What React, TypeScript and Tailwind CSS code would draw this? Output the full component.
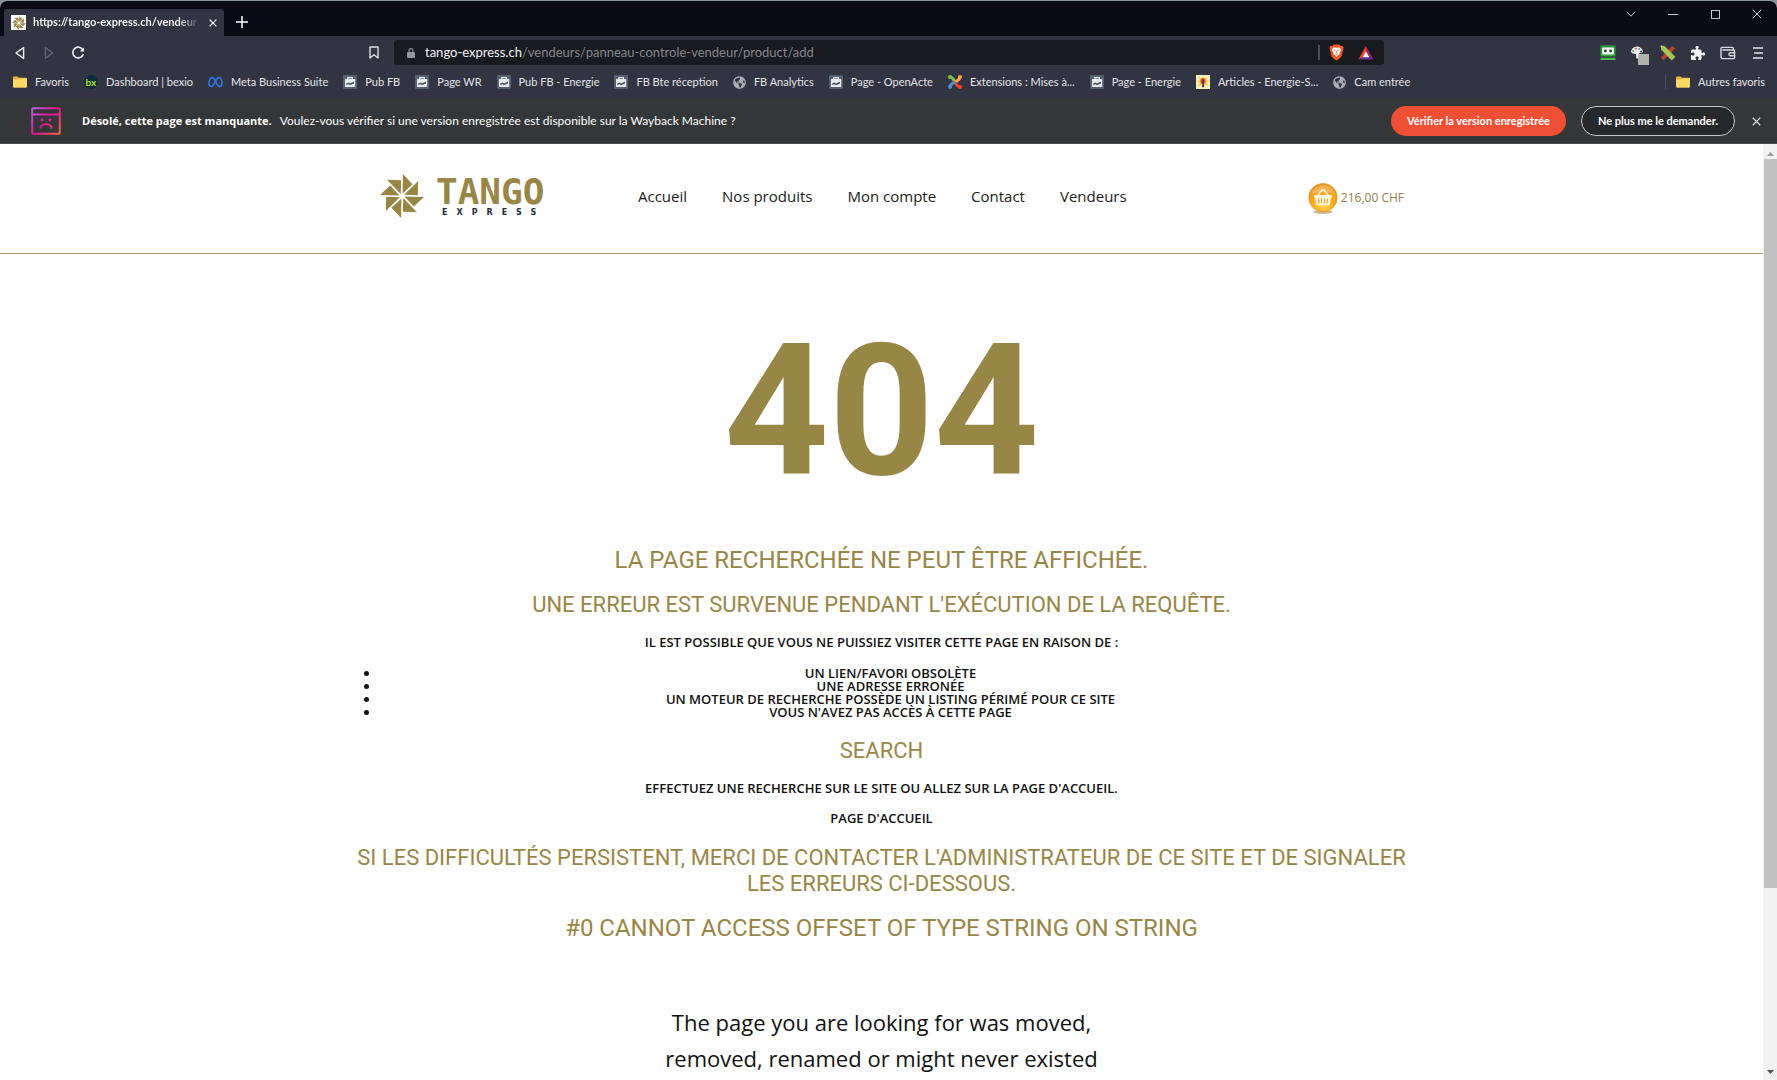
import type { ReactNode } from "react";
import { FaGlobeAmericas } from "react-icons/fa";
import { FaPuzzlePiece } from "react-icons/fa6";

function Pinwheel({ className }: { className: string }) {
  const blades = [0, 45, 90, 135, 180, 225, 270, 315];
  return (
    <svg viewBox="-22 -22 44 44" className={className} aria-hidden="true">
      {blades.map((a) => (
        <path key={a} d="M0.6 -2.4 L0.9 -22 L10.6 -11.8 Z" fill="#988647" transform={`rotate(${a})`} />
      ))}
    </svg>
  );
}

function Folder() {
  return (
    <svg viewBox="0 0 14 14" className="size-[14px] shrink-0" aria-hidden="true">
      <path d="M0 2.2 Q0 1.4 .8 1.4 H4.6 L6 2.8 H13.2 Q14 2.8 14 3.6 V11.6 Q14 12.4 13.2 12.4 H.8 Q0 12.4 0 11.6Z" fill="#e8b339" />
      <path d="M0 4.6 H5 L6.4 3.4 H14 V11.6 Q14 12.4 13.2 12.4 H.8 Q0 12.4 0 11.6Z" fill="#fbd968" />
    </svg>
  );
}

function Bexio() {
  return (
    <span className="flex size-[14px] shrink-0 items-center justify-center rounded-full bg-[#0d2f3b] text-[10px] leading-none font-bold text-[#b8dc1e]">
      bx
    </span>
  );
}

function Meta() {
  return (
    <svg viewBox="0 0 16 12" className="h-3 w-[15px] shrink-0" aria-hidden="true">
      <path
        d="M1 8.2 C1 4.6 2.4 1.4 4.6 1.4 C7.8 1.4 8.8 10.6 12.4 10.6 C14.2 10.6 15 9.6 15 7.6 C15 4.2 13.6 1.4 11.4 1.4 C8 1.4 7.2 10.6 3.6 10.6 C1.9 10.6 1 9.8 1 8.2Z"
        fill="none"
        stroke="#2f74e8"
        strokeWidth="1.8"
      />
    </svg>
  );
}

function Briefcase() {
  return (
    <svg viewBox="0 0 14 14" className="size-[14px] shrink-0" aria-hidden="true">
      <rect width="14" height="14" rx="1" fill="#566070" />
      <path d="M4.8 4.2 V2.6 H9.4 V4.2" fill="none" stroke="#e8ebee" strokeWidth="1.2" />
      <rect x="2" y="4" width="10.2" height="8" rx=".6" fill="#e8ebee" />
      <path d="M3.2 8.6 L5.6 7.4 L7 8.6 L11 6.4 V8.4 L7 10.2 L5.4 9.2 L3.2 10Z" fill="#4a5463" />
    </svg>
  );
}

function Globe() {
  return <FaGlobeAmericas className="size-[13px] shrink-0 text-[#a9acb4]" aria-hidden="true" />;
}

function Joomla() {
  return (
    <svg viewBox="0 0 14 14" className="size-[14px] shrink-0" fill="none" strokeWidth="3" aria-hidden="true">
      <path d="M2 2 Q5 2.4 7 7" stroke="#7ac143" />
      <path d="M12 2 Q11.6 5 7 7" stroke="#f9a541" />
      <path d="M12 12 Q9 11.6 7 7" stroke="#f44321" />
      <path d="M2 12 Q2.4 9 7 7" stroke="#5091cd" />
      <circle cx="2" cy="2" r="2" fill="#7ac143" />
      <circle cx="12" cy="2" r="2" fill="#f9a541" />
      <circle cx="12" cy="12" r="2" fill="#f44321" />
      <circle cx="2" cy="12" r="2" fill="#5091cd" />
    </svg>
  );
}

function Sunburst() {
  return (
    <svg viewBox="0 0 14 14" className="size-[14px] shrink-0" aria-hidden="true">
      <rect width="14" height="14" fill="#f2f3c4" />
      <path d="M7 0 L8 4 L12 1.4 L9.8 5.2 L14 6 L10 7.6 L13 11 L9 9.6 L7 14 L5 9.6 L1.4 11.6 L4 7.8 L0 6.4 L4.2 5.2 L2 1.4 L6 4Z" fill="#f4c63a" />
      <ellipse cx="7" cy="6" rx="2.6" ry="3" fill="#e5532d" />
      <path d="M6.2 4.4 H7.8 V9 L8.2 12 H6 L6.4 9Z" fill="#4a2373" />
    </svg>
  );
}

const bookmarks: { label: string; icon: ReactNode }[] = [
  { label: "Favoris", icon: <Folder /> },
  { label: "Dashboard | bexio", icon: <Bexio /> },
  { label: "Meta Business Suite", icon: <Meta /> },
  { label: "Pub FB", icon: <Briefcase /> },
  { label: "Page WR", icon: <Briefcase /> },
  { label: "Pub FB - Energie", icon: <Briefcase /> },
  { label: "FB Bte réception", icon: <Briefcase /> },
  { label: "FB Analytics", icon: <Globe /> },
  { label: "Page - OpenActe", icon: <Briefcase /> },
  { label: "Extensions : Mises à...", icon: <Joomla /> },
  { label: "Page - Energie", icon: <Briefcase /> },
  { label: "Articles - Energie-S...", icon: <Sunburst /> },
  { label: "Cam entrée", icon: <Globe /> },
];

function IconButton({ label, children }: { label: string; children: ReactNode }) {
  return (
    <button type="button" aria-label={label} className="flex size-4 shrink-0 items-center justify-center">
      {children}
    </button>
  );
}

function Cross({ className }: { className: string }) {
  return (
    <svg viewBox="0 0 10 10" className={className} fill="none" stroke="currentColor" aria-hidden="true">
      <path d="M.8 .8 L9.2 9.2 M9.2 .8 L.8 9.2" />
    </svg>
  );
}

function TabStrip() {
  return (
    <div className="flex h-[35px] items-end justify-between bg-[#0a0a15] pl-1">
      <div className="flex items-end">
        <div className="flex h-[27px] w-[220px] items-center rounded-t-[3px] bg-[#333442] pr-[7px] pl-[7px]">
          <span className="mr-[7px] flex size-[15px] shrink-0 items-center justify-center bg-white">
            <Pinwheel className="size-[14px]" />
          </span>
          <span className="min-w-0 flex-1 overflow-hidden bg-linear-to-r from-white from-85% to-transparent bg-clip-text text-[11px] font-bold whitespace-nowrap text-transparent">
            https://tango-express.ch/vendeur
          </span>
          <button type="button" aria-label="Fermer l'onglet" className="ml-2 text-white">
            <Cross className="size-2 stroke-[1.6]" />
          </button>
        </div>
        <button type="button" aria-label="Nouvel onglet" className="ml-3 flex h-7 items-center text-white">
          <svg viewBox="0 0 12 12" className="size-3" stroke="currentColor" strokeWidth="1.5" aria-hidden="true">
            <path d="M6 0 V12 M0 6 H12" />
          </svg>
        </button>
      </div>
      <div className="flex items-center gap-[26px] self-start pt-[5px] pr-3 text-[#c6c7cc]">
        <IconButton label="Rechercher dans les onglets">
          <svg viewBox="0 0 10 6" className="h-[6px] w-[10px]" fill="none" stroke="currentColor" aria-hidden="true">
            <path d="M.8 .8 L5 5.2 L9.2 .8" />
          </svg>
        </IconButton>
        <IconButton label="Réduire">
          <span className="h-px w-[10px] bg-current" />
        </IconButton>
        <IconButton label="Agrandir">
          <span className="size-[9px] border border-current" />
        </IconButton>
        <IconButton label="Fermer">
          <Cross className="size-[10px]" />
        </IconButton>
      </div>
    </div>
  );
}

function Toolbar() {
  return (
    <div className="flex h-[33px] items-center bg-[#333442]">
      <div className="flex w-[394px] shrink-0 items-center justify-between pr-[15px] pl-3">
        <div className="flex gap-[13px]">
          <IconButton label="Page précédente">
            <svg viewBox="0 0 12 14" className="h-[14px] w-3" fill="none" stroke="#e6e7ea" strokeWidth="1.5" strokeLinejoin="round" aria-hidden="true">
              <path d="M9.6 1.6 V12.4 L2 7Z" />
            </svg>
          </IconButton>
          <IconButton label="Page suivante">
            <svg viewBox="0 0 12 14" className="h-[14px] w-3" fill="none" stroke="#686a76" strokeWidth="1.3" strokeLinejoin="round" aria-hidden="true">
              <path d="M2.4 1.8 V12.2 L9.8 7Z" />
            </svg>
          </IconButton>
          <IconButton label="Actualiser">
            <svg viewBox="0 0 14 14" className="size-[14px]" fill="none" stroke="#f0f0f2" strokeWidth="1.6" aria-hidden="true">
              <path d="M12 4 A5.4 5.4 0 1 0 12.4 8" />
              <path d="M13 1.4 V5.6 H8.8Z" fill="#f0f0f2" stroke="none" />
            </svg>
          </IconButton>
        </div>
        <button type="button" aria-label="Ajouter aux favoris">
          <svg viewBox="0 0 10 13" className="h-[13px] w-[10px]" fill="none" stroke="#dcdde0" strokeWidth="1.4" strokeLinejoin="round" aria-hidden="true">
            <path d="M1 1 H9 V12 L5 8.8 L1 12Z" />
          </svg>
        </button>
      </div>
      <div className="flex h-[25px] max-w-[990px] flex-1 items-center rounded-[3px] bg-[#181a20] pr-[10px] pl-[13px]">
        <svg viewBox="0 0 8 10" className="mr-2.5 h-[10px] w-2" aria-hidden="true">
          <rect y="4" width="8" height="6" rx=".8" fill="#94969b" />
          <path d="M2 4.4 V2.6 A2 2 0 0 1 6 2.6 V4.4" fill="none" stroke="#94969b" strokeWidth="1.1" />
        </svg>
        <a href="#adresse" className="flex-1 text-[13px] whitespace-nowrap text-[#84868c]">
          <span className="text-[#f3f3f4]">tango-express.ch</span>/vendeurs/panneau-controle-vendeur/product/add
        </a>
        <span className="mr-2 h-[15px] w-0.5 bg-[#4b4d55]" />
        <IconButton label="Boucliers">
          <svg viewBox="0 0 16 18" className="h-[17px] w-[15px]" aria-hidden="true">
            <path d="M3.6 2 L5.2 .4 H10.8 L12.4 2 L14.4 1.8 L15.6 4 L15 6 L13.4 12.6 Q13 14 8 17.6 Q3 14 2.6 12.6 L1 6 L.4 4 L1.6 1.8Z" fill="#f15a2b" />
            <path d="M4.6 3.6 L8 4 L11.4 3.6 L13 6.4 L11 9 L11.4 10.6 L9.4 12 L8 13.8 L6.6 12 L4.6 10.6 L5 9 L3 6.4Z" fill="#fff" />
            <path d="M5 6.2 L7.2 6.8 M11 6.2 L8.8 6.8 M8 7.6 V10 M6.6 10.6 L8 11.2 L9.4 10.6" stroke="#f15a2b" strokeWidth=".9" fill="none" />
          </svg>
        </IconButton>
        <span className="w-[14px]" />
        <IconButton label="Brave Rewards">
          <svg viewBox="0 0 16 16" className="size-4" aria-hidden="true">
            <path d="M8 1 L8 6.6 L4.8 12 L.4 14.6Z" fill="#ff4724" />
            <path d="M8 1 L15.6 14.6 L11.2 12 L8 6.6Z" fill="#9e1f63" />
            <path d="M.4 14.6 H15.6 L11.2 12 H4.8Z" fill="#662d91" />
            <path d="M8 6.4 L11.4 12.2 H4.6Z" fill="#fff" />
          </svg>
        </IconButton>
      </div>
      <div className="ml-auto flex items-center gap-[14px] pr-[11px]">
        <IconButton label="RoboForm">
          <svg viewBox="0 0 16 16" className="size-4" aria-hidden="true">
            <rect x=".5" y=".5" width="15" height="11" rx="1" fill="#2fa03b" />
            <rect x="2.2" y="2.4" width="11.6" height="7" rx="1" fill="#f4f6f4" />
            <circle cx="5.4" cy="5.9" r="1.4" fill="#20382a" />
            <circle cx="10.6" cy="5.9" r="1.4" fill="#20382a" />
            <rect x=".5" y="12.8" width="15" height="2.2" fill="#4cb648" />
          </svg>
        </IconButton>
        <IconButton label="ColorZilla">
          <span className="relative flex size-4">
            <svg viewBox="0 0 14 14" className="size-[14px]" aria-hidden="true">
              <path d="M1 7 A6 5.4 0 0 1 13 7 Q12 8.4 9.4 8 L8 13.4 H6.4 L6 9 Q2.4 9 1 7Z" fill="#f6f6f6" />
              <circle cx="3.2" cy="6" r="1.1" fill="#3aa648" />
              <circle cx="6" cy="3.6" r="1.1" fill="#e4572e" />
              <circle cx="9.2" cy="4" r="1.1" fill="#48a7dd" />
              <circle cx="11" cy="6.4" r="1" fill="#333" />
            </svg>
            <span className="absolute top-[9px] left-2 size-[11px] bg-[#b3b2ae]" />
          </span>
        </IconButton>
        <IconButton label="Outils de conception">
          <svg viewBox="0 0 16 16" className="size-4" aria-hidden="true">
            <path d="M12.4 .8 L15.2 3.6 L3.6 15.2 L.8 12.4Z" fill="#b8412f" />
            <path d="M.8 .6 L4.8 1.2 L15.4 11.8 L11.8 15.4 L1.2 4.8Z" fill="#a6c653" />
            <path d="M.8 .6 L3 1 L1.1 3Z" fill="#e8d9a4" />
          </svg>
        </IconButton>
        <IconButton label="Extensions">
          <FaPuzzlePiece className="size-[14px] text-[#f2f2f3]" />
        </IconButton>
        <IconButton label="Portefeuille">
          <svg viewBox="0 0 16 14" className="h-[14px] w-4" fill="none" stroke="#d9dade" strokeWidth="1.4" aria-hidden="true">
            <path d="M13.4 4 V2.6 Q13.4 1.4 12.2 1.4 H2.4 Q1 1.4 1 2.8 V11 Q1 12.6 2.6 12.6 H13.4 Q14.6 12.6 14.6 11.4 V5.2 Q14.6 4 13.4 4 H2.4" />
            <path d="M14.6 6.8 H10.4 Q9 6.8 9 8.2 Q9 9.8 10.4 9.8 H14.6" />
          </svg>
        </IconButton>
        <IconButton label="Menu">
          <svg viewBox="0 0 10 12" className="h-3 w-[10px]" stroke="#e4e5e8" strokeWidth="1.5" aria-hidden="true">
            <path d="M0 1 H10 M1 6 H10 M0 11 H10" />
          </svg>
        </IconButton>
      </div>
    </div>
  );
}

function BookmarkLink({ label, icon }: { label: string; icon: ReactNode }) {
  return (
    <a href="#favori" className="flex items-center gap-2 text-[11px] whitespace-nowrap text-[#e3e4e8]">
      {icon}
      {label}
    </a>
  );
}

function BookmarkBar() {
  return (
    <nav aria-label="Favoris" className="flex h-[30px] items-center bg-[#333442] pr-3 pb-1 pl-[13px]">
      <div className="flex items-center gap-[15px]">
        {bookmarks.map((b) => (
          <BookmarkLink key={b.label} label={b.label} icon={b.icon} />
        ))}
      </div>
      <span className="mr-[10px] ml-auto h-[14px] w-px bg-[#4a4c5e]" />
      <BookmarkLink label="Autres favoris" icon={<Folder />} />
    </nav>
  );
}

function InfoBar() {
  return (
    <div className="flex h-[45px] items-center border-b border-[#4f5052] bg-[#353638] pr-[16px] pl-[31px] text-white">
      <svg viewBox="0 0 30 28" className="mr-[21px] h-7 w-[30px] shrink-0" fill="none" stroke="url(#missing-page)" strokeWidth="2" aria-hidden="true">
        <defs>
          <linearGradient id="missing-page" x1="0" y1="0" x2="30" y2="28" gradientUnits="userSpaceOnUse">
            <stop offset="0" stopColor="#b06be8" />
            <stop offset=".5" stopColor="#e5128f" />
            <stop offset="1" stopColor="#f0703c" />
          </linearGradient>
        </defs>
        <rect x="1.2" y="1.2" width="27.6" height="25.6" rx="1" />
        <path d="M1 7.4 H29" />
        <path d="M9.6 21.4 V19.4 Q15 14.6 20.4 19.4 V21.4" />
        <circle cx="11" cy="12.8" r=".6" />
        <circle cx="19" cy="12.8" r=".6" />
      </svg>
      <p className="flex-1 text-[12px] whitespace-nowrap">
        <strong className="mr-2 font-['Open_Sans',sans-serif] text-[11px] font-bold">Désolé, cette page est manquante.</strong>
        Voulez-vous vérifier si une version enregistrée est disponible sur la Wayback Machine ?
      </p>
      <button type="button" className="mr-[15px] h-[30px] rounded-full bg-[#ee4f35] px-4 text-[11px] font-bold whitespace-nowrap">
        Vérifier la version enregistrée
      </button>
      <button type="button" className="mr-[17px] h-[30px] rounded-full border border-[#c4c4c5] bg-[#27282b] px-4 text-[11px] font-bold whitespace-nowrap">
        Ne plus me le demander.
      </button>
      <button type="button" aria-label="Fermer" className="text-[#d8d8d9]">
        <Cross className="size-[9px] stroke-[1.3]" />
      </button>
    </div>
  );
}

function Basket() {
  return (
    <svg viewBox="0 0 30 32" className="h-8 w-[30px]" aria-hidden="true">
      <defs>
        <radialGradient id="basket-ball" cx=".5" cy=".75" r=".75">
          <stop offset="0" stopColor="#ffd84a" />
          <stop offset=".55" stopColor="#f7a81f" />
          <stop offset="1" stopColor="#e58e17" />
        </radialGradient>
      </defs>
      <ellipse cx="15" cy="30" rx="9.6" ry="1.8" fill="#a98b45" opacity=".6" />
      <circle cx="15" cy="15.6" r="14.2" fill="url(#basket-ball)" stroke="#dd9a35" strokeWidth=".8" />
      <path d="M3 12 A12.4 12 0 0 1 27 12 Q15 8 3 12Z" fill="#fff" opacity=".25" />
      <path d="M9.4 13.6 L13.8 8.2 H16.2 L20.6 13.6" fill="none" stroke="#fff6df" strokeWidth="1.4" />
      <path d="M6 13 H24 V15.6 H22.8 L21.6 23.2 H8.4 L7.2 15.6 H6Z" fill="#fff6df" />
      <path d="M10.4 16.6 L11 21.6 M13.5 16.6 V21.6 M16.5 16.6 V21.6 M19.6 16.6 L19 21.6" stroke="#f3a526" strokeWidth="1.2" />
    </svg>
  );
}

const links = ["Accueil", "Nos produits", "Mon compte", "Contact", "Vendeurs"];

function SiteHeader() {
  return (
    <header className="h-[110px] border-b border-[#a59a6b]">
      <div className="mx-auto flex h-[106px] max-w-[1045px] items-center">
        <a href="#accueil" className="ml-[21px] flex w-[258px] items-center pb-[2px]">
          <Pinwheel className="mr-3 size-11" />
          <span className="flex flex-col">
            <span className="font-['DejaVu_Sans_Mono',monospace] text-[36px] leading-8 font-bold text-[#988647]">TANGO</span>
            <span className="pl-[6px] font-['DejaVu_Sans',sans-serif] text-[8px] leading-[9px] font-bold tracking-[9px] text-[#1f2c3c]">EXPRESS</span>
          </span>
        </a>
        <nav aria-label="Menu principal" className="flex gap-[35px] pb-px text-[15px] text-[#1b1b1b]">
          {links.map((l) => (
            <a key={l} href="#menu">
              {l}
            </a>
          ))}
        </nav>
        <a href="#panier" className="ml-auto flex items-center gap-[3px] pt-px text-[12px] text-[#8f8048]">
          <Basket />
          216,00 CHF
        </a>
      </div>
    </header>
  );
}

const h1 = "mt-[18px] text-[24px] leading-[26px] text-[#988647]";
const h2 = "mt-[19px] text-[22px] leading-[26px] text-[#988647]";
const note = "text-[13px] leading-[15px] font-semibold text-[#111111]";

function NotFound() {
  return (
    <main className="mx-auto max-w-[1050px] text-center">
      <h1 className="mt-[66px] mb-[44px] font-['Roboto',sans-serif] text-[183px] leading-[183px] font-bold text-[#988647]">404</h1>
      <section className="font-['Roboto',sans-serif] uppercase">
        <h2 className={h1}>La page recherchée ne peut être affichée.</h2>
        <h3 className={h2}>Une erreur est survenue pendant l'exécution de la requête.</h3>
        <div className="font-['Open_Sans',sans-serif]">
          <p className={`mt-[17px] ${note}`}>Il est possible que vous ne puissiez visiter cette page en raison de :</p>
          <ul className="mt-[17px] list-disc pr-[5px] pl-[23px] text-[13px] leading-[13px] font-semibold text-[#111111]">
            <li>Un lien/favori obsolète</li>
            <li>Une adresse erronée</li>
            <li>Un moteur de recherche possède un listing périmé pour ce site</li>
            <li>Vous n'avez pas accès à cette page</li>
          </ul>
        </div>
        <h3 className={h2}>Search</h3>
        <div className="font-['Open_Sans',sans-serif]">
          <p className={`mt-[17px] ${note}`}>Effectuez une recherche sur le site ou allez sur la page d'accueil.</p>
          <p className={`mt-[15px] ${note}`}>
            <a href="#accueil">Page d'accueil</a>
          </p>
        </div>
        <h3 className={h2}>Si les difficultés persistent, merci de contacter l'administrateur de ce site et de signaler les erreurs ci-dessous.</h3>
        <h2 className={h1}>#0 Cannot access offset of type string on string</h2>
      </section>
      <p className="mx-auto mt-[63px] max-w-[460px] text-[22px] leading-9 text-[#111111]">
        The page you are looking for was moved, removed, renamed or might never existed
      </p>
    </main>
  );
}

function Scrollbar() {
  return (
    <div className="flex w-[14px] shrink-0 flex-col items-center bg-[#f1f1f1] py-[5px] pl-px" aria-hidden="true">
      <svg viewBox="0 0 7 4" className="my-[3px] h-1 w-[7px] shrink-0">
        <path d="M0 4 L3.5 0 L7 4Z" fill="#9a9a9a" />
      </svg>
      <div className="w-full flex-1">
        <div className="h-4/5 w-full bg-[#c1c1c1]" />
      </div>
      <svg viewBox="0 0 7 4" className="mb-px h-1 w-[7px] shrink-0">
        <path d="M0 0 L3.5 4 L7 0Z" fill="#505050" />
      </svg>
    </div>
  );
}

export default function App() {
  return (
    <div className="h-screen bg-[#8a9498] pt-px font-['Open_Sans',sans-serif]">
      <div className="flex h-full flex-col overflow-hidden rounded-t-[7px] bg-white">
        <div className="font-['Lato',sans-serif]">
          <TabStrip />
          <Toolbar />
          <BookmarkBar />
          <InfoBar />
        </div>
        <div className="flex min-h-0 flex-1">
          <div className="min-w-0 flex-1 overflow-hidden bg-[#fefefe]">
            <SiteHeader />
            <NotFound />
          </div>
          <Scrollbar />
        </div>
      </div>
    </div>
  );
}
